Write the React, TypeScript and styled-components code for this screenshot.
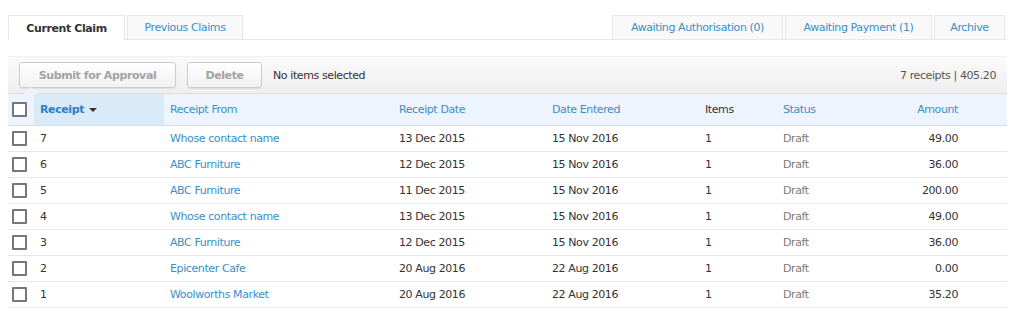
import styled, { createGlobalStyle } from "styled-components";

const GlobalStyle = createGlobalStyle`
  body {
    margin: 0;
    background: #ffffff;
    font-family: "DejaVu Sans", Verdana, sans-serif;
    font-size: 11px;
    letter-spacing: -0.4px;
    color: #333333;
  }
`;

interface Receipt {
  id: number;
  from: string;
  receiptDate: string;
  entered: string;
  items: number;
  status: string;
  amount: string;
}

const receipts: Receipt[] = [
  { id: 7, from: "Whose contact name", receiptDate: "13 Dec 2015", entered: "15 Nov 2016", items: 1, status: "Draft", amount: "49.00" },
  { id: 6, from: "ABC Furniture", receiptDate: "12 Dec 2015", entered: "15 Nov 2016", items: 1, status: "Draft", amount: "36.00" },
  { id: 5, from: "ABC Furniture", receiptDate: "11 Dec 2015", entered: "15 Nov 2016", items: 1, status: "Draft", amount: "200.00" },
  { id: 4, from: "Whose contact name", receiptDate: "13 Dec 2015", entered: "15 Nov 2016", items: 1, status: "Draft", amount: "49.00" },
  { id: 3, from: "ABC Furniture", receiptDate: "12 Dec 2015", entered: "15 Nov 2016", items: 1, status: "Draft", amount: "36.00" },
  { id: 2, from: "Epicenter Cafe", receiptDate: "20 Aug 2016", entered: "22 Aug 2016", items: 1, status: "Draft", amount: "0.00" },
  { id: 1, from: "Woolworths Market", receiptDate: "20 Aug 2016", entered: "22 Aug 2016", items: 1, status: "Draft", amount: "35.20" },
];

const Page = styled.div`
  width: 999px;
  padding: 15px 0 0 8px;
`;

const TabBar = styled.div`
  display: flex;
  justify-content: space-between;
  border-bottom: 1px solid #e6e6e6;
`;

const TabGroup = styled.div`
  display: flex;
  gap: 2px;
  &:last-child {
    margin-right: 2px;
  }
`;

const Tab = styled.div<{ $active?: boolean; $width: number }>`
  width: ${({ $width }) => $width}px;
  box-sizing: border-box;
  display: flex;
  align-items: center;
  justify-content: center;
  border: 1px solid #e6e6e6;
  border-bottom: none;
  background: ${({ $active }) => ($active ? "#ffffff" : "#f9f9f9")};
  color: ${({ $active }) => ($active ? "#333333" : "#3a8fc6")};
  font-weight: ${({ $active }) => ($active ? "bold" : "normal")};
  margin-bottom: ${({ $active }) => ($active ? "-1px" : "0")};
  height: ${({ $active }) => ($active ? "25px" : "24px")};
`;

const Toolbar = styled.div`
  position: relative;
  margin-top: 16px;
  height: 36px;
  display: flex;
  align-items: center;
  padding: 0 11px;
  background: linear-gradient(#fbfbfb, #eeeeee);
  border-top: 1px solid #f0f0f0;
  border-bottom: 1px solid #dddddd;

  &::after {
    content: "";
    position: absolute;
    left: 16px;
    bottom: -1px;
    border: 7px solid transparent;
    border-bottom-color: #eef4fd;
    border-top: none;
  }
`;

const Button = styled.button<{ $width: number }>`
  width: ${({ $width }) => $width}px;
  height: 26px;
  margin-right: 11px;
  border: 1px solid #cccccc;
  border-radius: 3px;
  background: linear-gradient(#ffffff, #f1f1f1);
  box-shadow: 0 1px 1px rgba(0, 0, 0, 0.08);
  color: #a3a3a3;
  font-family: inherit;
  font-size: 11px;
  letter-spacing: -0.4px;
  font-weight: bold;
  cursor: default;
`;

const SelectionNote = styled.span`
  color: #333333;
`;

const Summary = styled.span`
  margin-left: auto;
  color: #555555;
`;

const Grid = styled.div`
  display: grid;
  grid-template-columns: 26px 130px 229px 153px 153px 78px 110px 77px 43px;
`;

const HeaderRow = styled(Grid)`
  height: 32px;
  background: #eef4fd;
  border-bottom: 1px solid #d8dee8;
  box-sizing: border-box;
`;

const Row = styled(Grid)`
  height: 26px;
  border-bottom: 1px solid #e6e6e6;
  box-sizing: border-box;
`;

const Cell = styled.div<{ $tone?: "link" | "muted" | "dark"; $right?: boolean; $sorted?: boolean; $bold?: boolean }>`
  display: flex;
  align-items: center;
  padding: 0 6px;
  justify-content: ${({ $right }) => ($right ? "flex-end" : "flex-start")};
  color: ${({ $tone }) => ($tone === "link" ? "#3a8fc6" : $tone === "muted" ? "#7a7a7a" : "#333333")};
  background: ${({ $sorted }) => ($sorted ? "#d9eaf8" : "transparent")};
  font-weight: ${({ $bold }) => ($bold ? "bold" : "normal")};
  white-space: nowrap;
`;

const SortedHeader = styled(Cell)`
  color: #2a7fc0;
`;

const CheckCell = styled.div`
  display: flex;
  align-items: center;
  padding-left: 4px;
`;

const Checkbox = styled.span`
  width: 11px;
  height: 11px;
  border: 2px solid #777777;
  border-radius: 1px;
  background: #ffffff;
`;

const Caret = styled.span`
  margin-left: 5px;
  border: 4px solid transparent;
  border-top: 4px solid #333333;
  border-bottom: none;
`;

export default function App() {
  return (
    <>
      <GlobalStyle />
      <Page>
        <TabBar>
          <TabGroup>
            <Tab $active $width={117}>Current Claim</Tab>
            <Tab $width={116}>Previous Claims</Tab>
          </TabGroup>
          <TabGroup>
            <Tab $width={171}>Awaiting Authorisation (0)</Tab>
            <Tab $width={147}>Awaiting Payment (1)</Tab>
            <Tab $width={71}>Archive</Tab>
          </TabGroup>
        </TabBar>
        <Toolbar>
          <Button $width={157}>Submit for Approval</Button>
          <Button $width={75}>Delete</Button>
          <SelectionNote>No items selected</SelectionNote>
          <Summary>7 receipts | 405.20</Summary>
        </Toolbar>
        <HeaderRow>
          <CheckCell>
            <Checkbox />
          </CheckCell>
          <SortedHeader $sorted $bold>
            Receipt<Caret />
          </SortedHeader>
          <Cell $tone="link">Receipt From</Cell>
          <Cell $tone="link">Receipt Date</Cell>
          <Cell $tone="link">Date Entered</Cell>
          <Cell>Items</Cell>
          <Cell $tone="link">Status</Cell>
          <Cell $tone="link" $right>Amount</Cell>
          <Cell />
        </HeaderRow>
        {receipts.map((r) => (
          <Row key={r.id}>
            <CheckCell>
              <Checkbox />
            </CheckCell>
            <Cell>{r.id}</Cell>
            <Cell $tone="link">{r.from}</Cell>
            <Cell>{r.receiptDate}</Cell>
            <Cell>{r.entered}</Cell>
            <Cell>{r.items}</Cell>
            <Cell $tone="muted">{r.status}</Cell>
            <Cell $right>{r.amount}</Cell>
            <Cell />
          </Row>
        ))}
      </Page>
    </>
  );
}
